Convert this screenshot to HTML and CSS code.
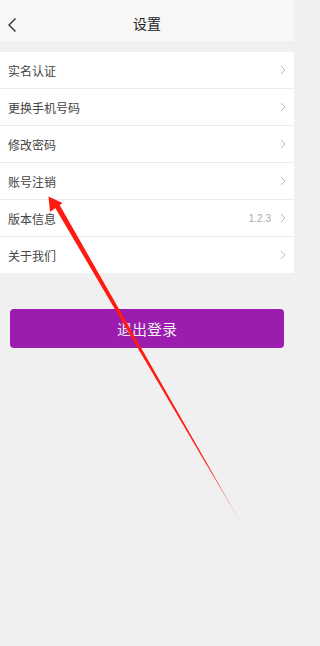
FILE: index.html
```html
<!DOCTYPE html>
<html lang="zh">
<head>
<meta charset="utf-8">
<link rel="stylesheet" href="styles.css">
</head>
<body>
<div class="page">
  <header class="topbar">
    <svg class="back" width="12" height="16" viewBox="0 0 12 16"><path d="M8.5 1.5 L2 8 L8.5 14.5" fill="none" stroke="#333" stroke-width="1.4"/></svg>
    <div class="title">设置</div>
  </header>
  <ul class="list">
    <li class="row"><span class="label">实名认证</span><span class="right"><svg class="chev" width="6" height="10" viewBox="0 0 6 10"><path d="M1 1 L5 5 L1 9" fill="none" stroke="#bbb" stroke-width="1"/></svg></span></li>
    <li class="row"><span class="label">更换手机号码</span><span class="right"><svg class="chev" width="6" height="10" viewBox="0 0 6 10"><path d="M1 1 L5 5 L1 9" fill="none" stroke="#bbb" stroke-width="1"/></svg></span></li>
    <li class="row"><span class="label">修改密码</span><span class="right"><svg class="chev" width="6" height="10" viewBox="0 0 6 10"><path d="M1 1 L5 5 L1 9" fill="none" stroke="#bbb" stroke-width="1"/></svg></span></li>
    <li class="row"><span class="label">账号注销</span><span class="right"><svg class="chev" width="6" height="10" viewBox="0 0 6 10"><path d="M1 1 L5 5 L1 9" fill="none" stroke="#bbb" stroke-width="1"/></svg></span></li>
    <li class="row"><span class="label">版本信息</span><span class="right"><span class="ver">1.2.3</span><svg class="chev" width="6" height="10" viewBox="0 0 6 10"><path d="M1 1 L5 5 L1 9" fill="none" stroke="#bbb" stroke-width="1"/></svg></span></li>
    <li class="row"><span class="label">关于我们</span><span class="right"><svg class="chev" width="6" height="10" viewBox="0 0 6 10"><path d="M1 1 L5 5 L1 9" fill="none" stroke="#bbb" stroke-width="1"/></svg></span></li>
  </ul>
  <div class="btnwrap"><button class="logout">退出登录</button></div>
  <svg class="arrow" width="294" height="646" viewBox="0 0 294 646">
    <defs>
      <linearGradient id="fade" x1="49" y1="197" x2="245" y2="530" gradientUnits="userSpaceOnUse">
        <stop offset="0" stop-color="#ff1a12" stop-opacity="1"/>
        <stop offset="0.8" stop-color="#ff1a12" stop-opacity="1"/>
        <stop offset="1" stop-color="#ff1a12" stop-opacity="0.1"/>
      </linearGradient>
    </defs>
    <polygon points="53.5,205 58.5,203 245,530" fill="url(#fade)"/>
    <polygon points="48.5,196.5 50,212 62.5,203" fill="#ff1a12"/>
  </svg>
</div>
</body>
</html>
```
FILE: styles.css
```css
* { box-sizing: border-box; margin: 0; padding: 0; }
html, body { background: #f0f0f0; }
body {
  width: 294px;
  height: 646px;
  overflow: hidden;
  font-family: "Noto Sans CJK SC", "Noto Sans", sans-serif;
}
.page { position: relative; width: 294px; height: 646px; }
.topbar {
  position: relative;
  height: 43px;
  background: #f7f7f7;
  display: flex;
  align-items: center;
  justify-content: center;
  border-bottom: 1px solid #ececec;
}
.back { position: absolute; left: 7px; top: 17px; }
.title { font-size: 14px; color: #222; line-height: 1; margin-top: 4px; }
.list {
  list-style: none;
  margin-top: 9px;
  background: #fff;
}
.row {
  height: 37px;
  display: flex;
  align-items: center;
  justify-content: space-between;
  padding: 0 8px 0 8px;
  border-bottom: 1px solid #ececec;
}
.row:last-child { border-bottom: none; height: 36px; }
.label { font-size: 12px; color: #444; }
.right { display: flex; align-items: center; gap: 9px; }
.ver { font-size: 10px; color: #aaa; font-family: "Liberation Sans", sans-serif; }
.chev { display: block; }
.btnwrap { padding: 36px 10px 0 10px; }
.logout {
  width: 100%;
  height: 39px;
  border: none;
  border-radius: 4px;
  background: #9b1caf;
  color: #eeeeee;
  font-size: 15px;
  font-family: "Noto Sans CJK SC", "Noto Sans", sans-serif;
}
.arrow { position: absolute; left: 0; top: 0; pointer-events: none; }
```
